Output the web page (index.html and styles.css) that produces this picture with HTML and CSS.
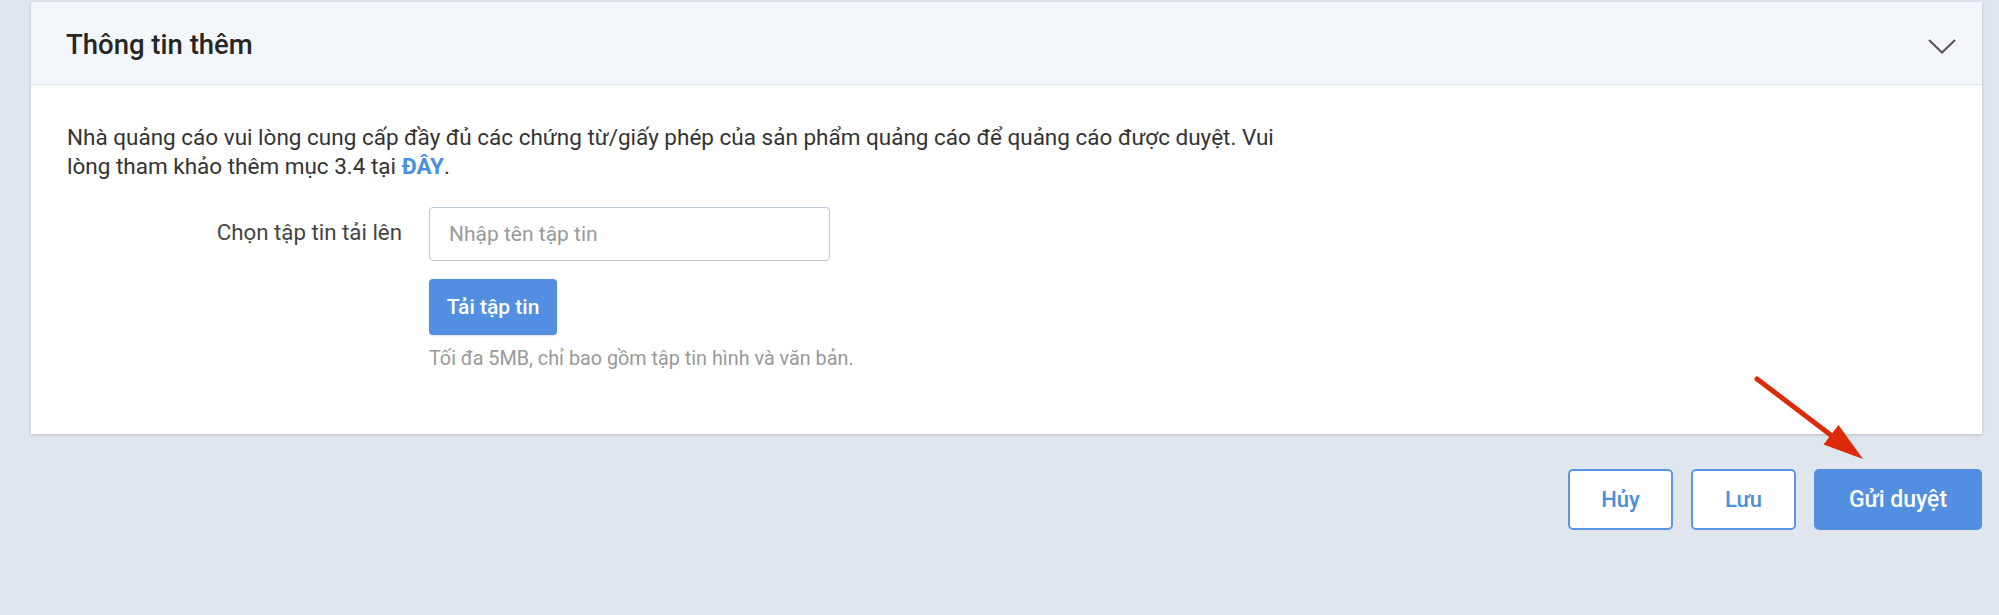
FILE: index.html
```html
<!DOCTYPE html>
<html lang="vi">
<head>
<meta charset="utf-8">
<title>Thông tin thêm</title>
<link rel="stylesheet" href="styles.css">
</head>
<body>
<div class="page">
  <section class="card">
    <header class="card-header">
      <h2 class="card-title">Thông tin thêm</h2>
      <svg class="chevron" width="28" height="15" viewBox="0 0 28 15" aria-hidden="true">
        <polyline points="1,1 14,13.5 27,1" fill="none" stroke="#555" stroke-width="2"/>
      </svg>
    </header>
    <div class="card-body">
      <p class="notice">Nhà quảng cáo vui lòng cung cấp đầy đủ các chứng từ/giấy phép của sản phẩm quảng cáo để quảng cáo được duyệt. Vui lòng tham khảo thêm mục 3.4 tại <a class="link" href="#">ĐÂY</a>.</p>
      <div class="form-row">
        <label class="form-label" for="file-name">Chọn tập tin tải lên</label>
        <div class="form-control">
          <input id="file-name" class="text-input" type="text" placeholder="Nhập tên tập tin">
          <button class="btn btn-primary btn-upload" type="button">Tải tập tin</button>
          <p class="hint">Tối đa 5MB, chỉ bao gồm tập tin hình và văn bản.</p>
        </div>
      </div>
    </div>
  </section>
  <div class="actions">
    <button class="btn btn-outline" type="button">Hủy</button>
    <button class="btn btn-outline" type="button">Lưu</button>
    <button class="btn btn-primary btn-submit" type="button">Gửi duyệt</button>
  </div>
  <svg class="annotation-arrow" width="130" height="100" viewBox="0 0 130 100" aria-hidden="true">
    <line x1="17" y1="9" x2="92" y2="66" stroke="#dd2a0a" stroke-width="5" stroke-linecap="round"/>
    <polygon points="123,89 83.5,74.5 98.5,55" fill="#dd2a0a"/>
  </svg>
</div>
</body>
</html>
```

FILE: styles.css
```css
* {
  box-sizing: border-box;
}

html, body {
  margin: 0;
  padding: 0;
}

body {
  background: #e0e6ee;
  font-family: Roboto, "Noto Sans", "Liberation Sans", sans-serif;
  color: #333;
  width: 1999px;
  height: 615px;
  overflow: hidden;
}

.page {
  position: relative;
  padding: 2px 17px 0 31px;
}

.card {
  background: #fff;
  box-shadow: 0 1px 3px rgba(40, 50, 70, 0.22);
}

.card-header {
  height: 83px;
  background: #f3f6fa;
  border-bottom: 1px solid #dfe7f0;
  display: flex;
  align-items: center;
  justify-content: space-between;
  padding: 0 26px 0 35px;
  box-shadow: 0 3px 4px -2px rgba(0, 0, 0, 0.05);
  position: relative;
}

.card-title {
  margin: 0;
  font-size: 27.5px;
  font-weight: 500;
  color: #262626;
  line-height: 1;
  padding-top: 3px;
}

.chevron {
  display: block;
  margin-top: 6px;
}

.card-body {
  padding: 38px 36px 62px;
}

.notice {
  margin: 0;
  max-width: 1215px;
  font-size: 22.5px;
  line-height: 29px;
  color: #333;
}

.link {
  color: #4a8fe2;
  font-weight: 700;
  text-decoration: none;
}

.form-row {
  display: flex;
  gap: 27px;
  margin-top: 26px;
}

.form-label {
  width: 335px;
  text-align: right;
  font-size: 22.3px;
  line-height: 29px;
  color: #444;
  padding-top: 11px;
}

.form-control {
  display: flex;
  flex-direction: column;
  align-items: flex-start;
}

.text-input {
  width: 401px;
  height: 54px;
  border: 1.5px solid #bcc8d8;
  border-radius: 4px;
  padding: 0 19px;
  font-family: inherit;
  font-size: 21px;
  color: #333;
  background: #fff;
  outline: none;
}

.text-input::placeholder {
  color: #9a9a9a;
}

.btn {
  font-family: inherit;
  font-size: 22px;
  font-weight: 500;
  border-radius: 5px;
  cursor: pointer;
  display: inline-flex;
  align-items: center;
  justify-content: center;
}

.btn-primary {
  background: #528fe0;
  border: none;
  color: #fff;
}

.btn-upload {
  margin-top: 18px;
  width: 128px;
  height: 56px;
  font-size: 21px;
  border-radius: 4px;
  box-shadow: 0 1px 2px rgba(0, 0, 0, 0.12);
}

.hint {
  margin: 11px 0 0;
  font-size: 19.8px;
  line-height: 26px;
  color: #999;
}

.actions {
  display: flex;
  justify-content: flex-end;
  gap: 18px;
  margin-top: 35px;
}

.btn-outline {
  width: 105px;
  height: 61px;
  background: #fff;
  border: 2px solid #5a96e5;
  color: #4a8ee0;
}

.btn-submit {
  width: 168px;
  height: 61px;
  font-size: 23px;
}

.annotation-arrow {
  position: absolute;
  left: 1740px;
  top: 370px;
}
```
